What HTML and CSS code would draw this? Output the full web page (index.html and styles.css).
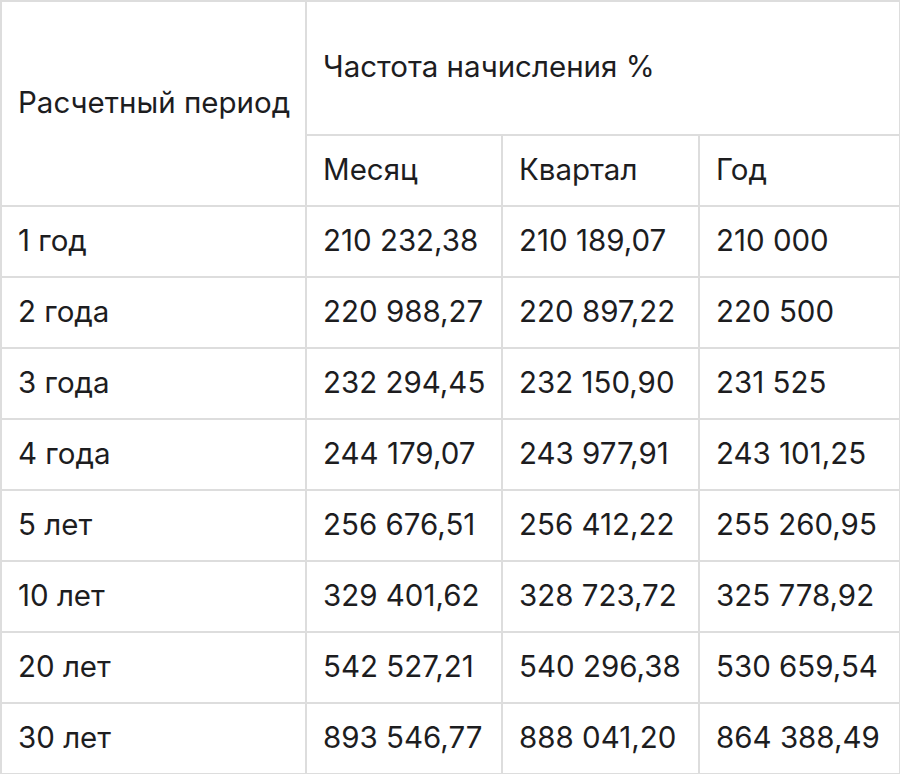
FILE: index.html
```html
<!DOCTYPE html>
<html lang="ru">
<head>
<meta charset="utf-8">
<title>Таблица</title>
<link rel="stylesheet" href="styles.css">
</head>
<body>
<table class="rates">
  <colgroup>
    <col class="c1"><col class="c2"><col class="c3"><col class="c4">
  </colgroup>
  <thead>
    <tr class="h1">
      <th rowspan="2">Расчетный период</th>
      <th colspan="3">Частота начисления %</th>
    </tr>
    <tr class="h2">
      <th>Месяц</th><th>Квартал</th><th>Год</th>
    </tr>
  </thead>
  <tbody>
    <tr><td>1 год</td><td>210 232,38</td><td>210 189,07</td><td>210 000</td></tr>
    <tr><td>2 года</td><td>220 988,27</td><td>220 897,22</td><td>220 500</td></tr>
    <tr><td>3 года</td><td>232 294,45</td><td>232 150,90</td><td>231 525</td></tr>
    <tr><td>4 года</td><td>244 179,07</td><td>243 977,91</td><td>243 101,25</td></tr>
    <tr><td>5 лет</td><td>256 676,51</td><td>256 412,22</td><td>255 260,95</td></tr>
    <tr><td>10 лет</td><td>329 401,62</td><td>328 723,72</td><td>325 778,92</td></tr>
    <tr><td>20 лет</td><td>542 527,21</td><td>540 296,38</td><td>530 659,54</td></tr>
    <tr><td>30 лет</td><td>893 546,77</td><td>888 041,20</td><td>864 388,49</td></tr>
  </tbody>
</table>
</body>
</html>
```
FILE: styles.css
```css
html, body {
  margin: 0;
  padding: 0;
  background: #ffffff;
}
.rates {
  border-collapse: collapse;
  width: 899px;
  table-layout: fixed;
  margin: 0;
  font-family: Inter, "Noto Sans", sans-serif;
  font-size: 29.5px;
  color: #1d1d1f;
}
.c1 { width: 305px; }
.c2 { width: 196px; }
.c3 { width: 197px; }
.c4 { width: 201px; }
.rates th, .rates td {
  border: 2px solid #dddddd;
  padding: 0 16px 4px;
  text-align: left;
  font-weight: 400;
  white-space: nowrap;
  vertical-align: middle;
}
.rates tr { height: 71px; }
.rates tr.h1 { height: 134px; }
```
